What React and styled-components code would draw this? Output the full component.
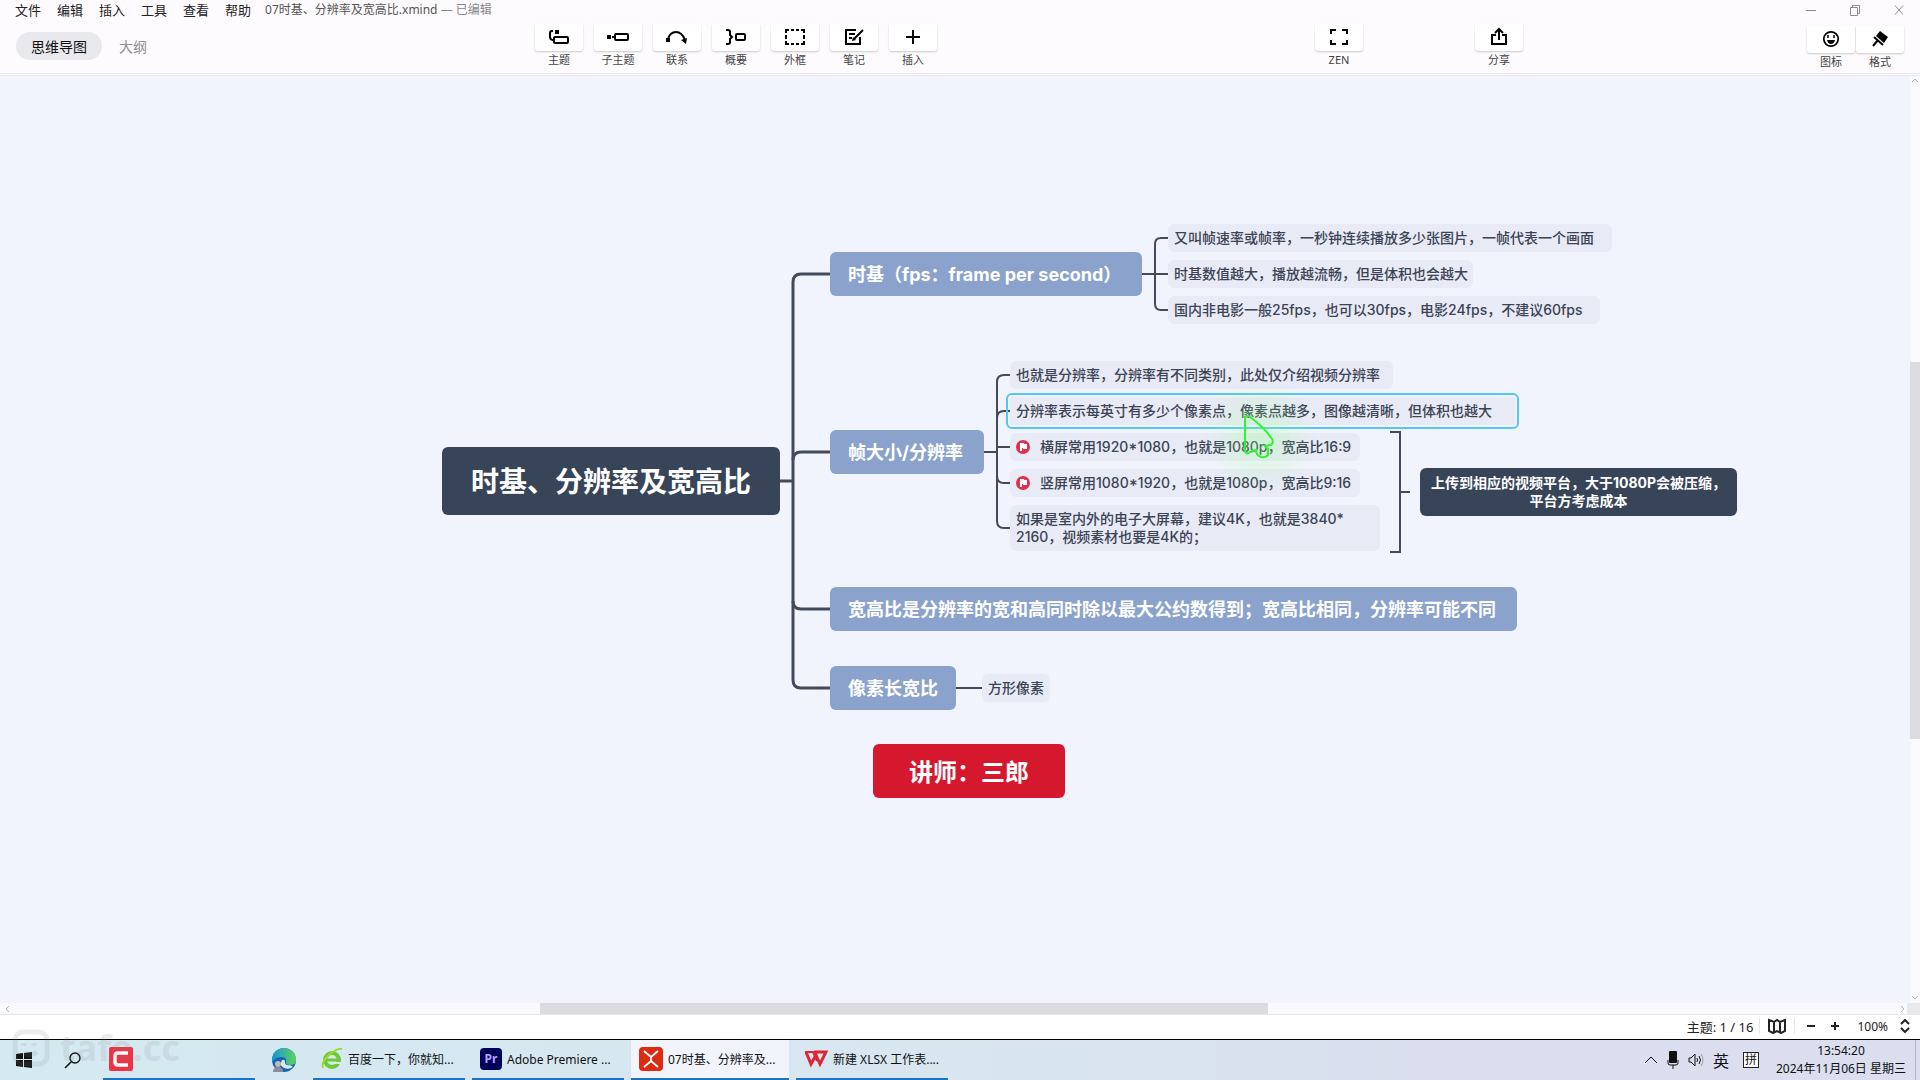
import React, { useState } from "react";
import styled, { createGlobalStyle } from "styled-components";

const menus = ["文件", "编辑", "插入", "工具", "查看", "帮助"];

const tools = [
  { label: "主题", icon: <TopicIcon /> },
  { label: "子主题", icon: <SubtopicIcon /> },
  { label: "联系", icon: <RelationIcon /> },
  { label: "概要", icon: <SummaryIcon /> },
  { label: "外框", icon: <BoundaryIcon /> },
  { label: "笔记", icon: <NoteIcon /> },
  { label: "插入", icon: <PlusIcon /> },
];

const branches = [
  { x: 830, y: 176, w: 312, text: "时基（fps：frame per second）" },
  { x: 830, y: 354, w: 154, text: "帧大小/分辨率" },
  {
    x: 830,
    y: 511,
    w: 687,
    text: "宽高比是分辨率的宽和高同时除以最大公约数得到；宽高比相同，分辨率可能不同",
  },
  { x: 830, y: 590, w: 126, text: "像素长宽比" },
];

const leaves = [
  { x: 1168, y: 148, w: 444, text: "又叫帧速率或帧率，一秒钟连续播放多少张图片，一帧代表一个画面" },
  { x: 1168, y: 184, w: 305, text: "时基数值越大，播放越流畅，但是体积也会越大" },
  { x: 1168, y: 220, w: 432, text: "国内非电影一般25fps，也可以30fps，电影24fps，不建议60fps" },
  { x: 1010, y: 285, w: 383, text: "也就是分辨率，分辨率有不同类别，此处仅介绍视频分辨率" },
  {
    x: 1010,
    y: 321,
    w: 505,
    selected: true,
    text: "分辨率表示每英寸有多少个像素点，像素点越多，图像越清晰，但体积也越大",
  },
  { x: 1010, y: 357, w: 350, flag: true, text: "横屏常用1920*1080，也就是1080p，宽高比16:9" },
  { x: 1010, y: 393, w: 350, flag: true, text: "竖屏常用1080*1920，也就是1080p，宽高比9:16" },
  {
    x: 1010,
    y: 429,
    w: 370,
    text: "如果是室内外的电子大屏幕，建议4K，也就是3840*\n2160，视频素材也要是4K的；",
  },
  { x: 982, y: 598, w: 68, text: "方形像素" },
];

const apps = [
  { name: "百度一下，你就知...", icon: <BrowserIcon /> },
  { name: "Adobe Premiere ...", icon: <PremiereIcon /> },
  { name: "07时基、分辨率及...", icon: <XmindIcon />, active: true },
  { name: "新建 XLSX 工作表....", icon: <WpsIcon /> },
];

function App() {
  const [tab, setTab] = useState("map");
  return (
    <Window>
      <GlobalStyle />
      <Header>
        <TitleBar>
          <MenuBar>
            {menus.map((m) => (
              <MenuButton key={m}>{m}</MenuButton>
            ))}
          </MenuBar>
          <FileName>
            07时基、分辨率及宽高比.xmind <Edited>— 已编辑</Edited>
          </FileName>
          <WindowButtons>
            <WindowButton aria-label="最小化">
              <svg width="12" height="12" viewBox="0 0 12 12">
                <path d="M1 6.500h10" />
              </svg>
            </WindowButton>
            <WindowButton aria-label="还原">
              <svg width="12" height="12" viewBox="0 0 12 12">
                <path d="M1.500 3.500h7v8h-7zM3.500 3.500v-2h7v8h-2" />
              </svg>
            </WindowButton>
            <WindowButton aria-label="关闭">
              <svg width="12" height="12" viewBox="0 0 12 12">
                <path d="M2 1.500l8 9M10 1.500l-8 9" />
              </svg>
            </WindowButton>
          </WindowButtons>
        </TitleBar>
        <ToolRow>
          <Tabs>
            <Tab $active={tab === "map"} onClick={() => setTab("map")}>
              思维导图
            </Tab>
            <Tab $active={tab === "outline"} onClick={() => setTab("outline")}>
              大纲
            </Tab>
          </Tabs>
          <ToolGroup>
            {tools.map((t) => (
              <Tool key={t.label}>
                <ToolFace>{t.icon}</ToolFace>
                {t.label}
              </Tool>
            ))}
          </ToolGroup>
          <ShareGroup>
            <Tool>
              <ToolFace>
                <ZenIcon />
              </ToolFace>
              ZEN
            </Tool>
            <Tool>
              <ToolFace>
                <ShareIcon />
              </ToolFace>
              分享
            </Tool>
          </ShareGroup>
          <PanelGroup>
            <Tool>
              <ToolFace>
                <SmileIcon />
              </ToolFace>
              图标
            </Tool>
            <Tool>
              <ToolFace>
                <BrushIcon />
              </ToolFace>
              格式
            </Tool>
          </PanelGroup>
        </ToolRow>
      </Header>
      <Workspace>
        <Board>
          <Connections />
          <RootTopic>时基、分辨率及宽高比</RootTopic>
          {branches.map((b) => (
            <Branch key={b.text} $x={b.x} $y={b.y} $w={b.w}>
              {b.text}
            </Branch>
          ))}
          {leaves.map((l) => (
            <Leaf key={l.text} $x={l.x} $y={l.y} $w={l.w} $selected={l.selected}>
              {l.flag && <FlagIcon />}
              {l.text}
            </Leaf>
          ))}
          <Summary>
            上传到相应的视频平台，大于1080P会被压缩，
            <br />
            平台方考虑成本
          </Summary>
          <Teacher>讲师：三郎</Teacher>
          <Pointer />
        </Board>
        <VerticalBar>
          <Arrow d="M2 6l3-3 3 3" />
          <VerticalThumb />
          <Arrow d="M2 3l3 3 3-3" />
        </VerticalBar>
      </Workspace>
      <HorizontalBar>
        <Arrow d="M6 2l-3 3 3 3" />
        <HorizontalThumb />
        <Arrow d="M4 2l3 3-3 3" />
        <Corner />
      </HorizontalBar>
      <StatusBar>
        <Count>主题: 1 / 16</Count>
        <StatusButton aria-label="导航" $framed>
          <MapIcon />
        </StatusButton>
        <StatusButton aria-label="缩小">
          <svg width="10" height="10" viewBox="0 0 10 10">
            <path d="M1 5h8" />
          </svg>
        </StatusButton>
        <StatusButton aria-label="放大">
          <svg width="10" height="10" viewBox="0 0 10 10">
            <path d="M1 5h8M5 1v8" />
          </svg>
        </StatusButton>
        <Zoom>
          100%
          <svg width="10" height="14" viewBox="0 0 10 14">
            <path d="M1 5l4-4 4 4M1 9l4 4 4-4" />
          </svg>
        </Zoom>
      </StatusBar>
      <Taskbar>
        <IconButton aria-label="开始">
          <WindowsIcon />
        </IconButton>
        <IconButton aria-label="搜索">
          <SearchIcon />
        </IconButton>
        <RecorderButton aria-label="Camtasia">
          <CamtasiaIcon />
        </RecorderButton>
        <IconButton aria-label="Edge">
          <EdgeIcon />
        </IconButton>
        <Apps>
          {apps.map((a) => (
            <AppButton key={a.name} $active={a.active}>
              {a.icon}
              {a.name}
            </AppButton>
          ))}
        </Apps>
        <Tray>
          <svg width="14" height="8" viewBox="0 0 14 8">
            <path d="M1 7l6-6 6 6" />
          </svg>
          <MicIcon />
          <SpeakerIcon />
          <Lang>英</Lang>
          <Ime>拼</Ime>
          <Clock>
            13:54:20
            <br />
            2024年11月06日 星期三
          </Clock>
          <ShowDesktop />
        </Tray>
        <Watermark />
      </Taskbar>
    </Window>
  );
}

export default App;

function Connections() {
  return (
    <Lines aria-hidden="true">
      <g strokeWidth="3">
        <path d="M780 405h13M830 198h-29q-8 0 -8 8v398q0 8 8 8h29" />
        <path d="M830 376h-29q-8 0 -8 8M830 533h-29q-8 0 -8-8" />
      </g>
      <g strokeWidth="2">
        <path d="M1142 198h26M1168 162h-7q-6 0 -6 6v60q0 6 6 6h7" />
        <path d="M984 376h13M1010 299h-6q-7 0 -7 7v139q0 7 7 7h6" />
        <path d="M1010 335h-6q-7 0 -7 7M997 371h13M1010 407h-6q-7 0 -7-7" />
        <path d="M956 612h26" />
        <path d="M1390 356h10v120h-10M1400 416h10" />
      </g>
    </Lines>
  );
}

function Pointer() {
  return (
    <PointerBox aria-hidden="true">
      <svg width="34" height="46" viewBox="0 0 34 46">
        <path d="M4 2Q2 2 2 5v31q0 4 3 3l8-3q0 5 5 7 4 1 7-2v-6l-3-3 6-1q3-2 1-6Q20 12 7 3q-2-2-3-1z" />
      </svg>
    </PointerBox>
  );
}

function Arrow({ d }) {
  return (
    <ArrowSvg width="10" height="10" viewBox="0 0 10 10">
      <path d={d} />
    </ArrowSvg>
  );
}

function ToolSvg({ children }) {
  return (
    <svg
      width="22"
      height="20"
      viewBox="0 0 22 20"
      fill="none"
      stroke="#000"
      strokeWidth="2"
    >
      {children}
    </svg>
  );
}

function TopicIcon() {
  return (
    <ToolSvg>
      <rect x="6" y="10" width="14" height="6" rx="1" />
      <path d="M5 4H4q-2 0-2 2v4q0 3 4 3" />
      <path d="M7 3h4v4H7z" fill="#000" stroke="none" />
    </ToolSvg>
  );
}

function SubtopicIcon() {
  return (
    <ToolSvg>
      <rect x="8" y="7" width="13" height="6" rx="1" />
      <path d="M5 10h3" />
      <path d="M0 8h4v4H0z" fill="#000" stroke="none" />
    </ToolSvg>
  );
}

function RelationIcon() {
  return (
    <ToolSvg>
      <path d="M2 12Q4 5 10 5t9 8" />
      <path d="M0 11h4v4H0zM15 13l6-2-1 6z" fill="#000" stroke="none" />
    </ToolSvg>
  );
}

function SummaryIcon() {
  return (
    <ToolSvg>
      <path d="M1 3h2q2 0 2 2v3l2 2-2 2v3q0 2-2 2H1" />
      <rect x="11" y="7" width="9" height="6" rx="1" />
    </ToolSvg>
  );
}

function BoundaryIcon() {
  return (
    <ToolSvg>
      <path d="M2 6V3h3M17 3h3v3M20 14v3h-3M5 17H2v-3M7 3h3M12 3h3M7 17h3M12 17h3M2 8v4M20 8v4" />
    </ToolSvg>
  );
}

function NoteIcon() {
  return (
    <ToolSvg>
      <path d="M13 3H3v14h14v-7M6 7h6M6 11h3M11 12l9-9" />
      <path d="M10 10l3 3-4 1z" fill="#000" stroke="none" />
    </ToolSvg>
  );
}

function PlusIcon() {
  return (
    <ToolSvg>
      <path d="M4 10h14M11 3v14" />
    </ToolSvg>
  );
}

function ZenIcon() {
  return (
    <ToolSvg>
      <path d="M3 7V3h5M14 3h5v4M19 13v4h-5M8 17H3v-4" />
    </ToolSvg>
  );
}

function ShareIcon() {
  return (
    <ToolSvg>
      <path d="M8 8H4v9h14V8h-4M11 13V3M7 6l4-4 4 4" />
    </ToolSvg>
  );
}

function SmileIcon() {
  return (
    <ToolSvg>
      <circle cx="11" cy="10" r="7.200" strokeWidth="1.700" />
      <path d="M8 6v3M14 6v3" strokeWidth="1.500" />
      <path d="M7 11h8q-1 4-4 4t-4-4z" fill="#000" stroke="none" />
    </ToolSvg>
  );
}

function BrushIcon() {
  return (
    <ToolSvg>
      <path d="M11 2l8 6-4 6-8-7z" fill="#000" stroke="none" />
      <path d="M5 8l9 8M9 11l-5 6" />
    </ToolSvg>
  );
}

function FlagIcon() {
  return (
    <Flag width="14" height="14" viewBox="0 0 14 14">
      <circle cx="7" cy="7" r="7" fill="#e0304e" />
      <path d="M4 3h4v1h3v5H7V8H6v3H4z" fill="#fff" />
      <path d="M5.300 4h2v1h2v3H7.700V7H5.300z" fill="#e0304e" />
      <path d="M5 3.500h3l2 1.500v3H7L5 7z" fill="#fff" />
    </Flag>
  );
}

function MapIcon() {
  return (
    <svg width="18" height="16" viewBox="0 0 18 16">
      <path d="M1 2l5 2 3-2 3 2 5-2v11l-4 2-4-2-4 2-4-2zM6 4v10M12 4v10" />
    </svg>
  );
}

function WindowsIcon() {
  return (
    <svg width="16" height="16" viewBox="0 0 16 16">
      <path
        d="M0 2l7-1v6H0zM8 1l8-1v7H8zM0 8h7v7l-7-1zM8 8h8v8l-8-1z"
        fill="#111"
      />
    </svg>
  );
}

function SearchIcon() {
  return (
    <svg width="17" height="17" viewBox="0 0 17 17" fill="none" stroke="#111">
      <circle cx="11" cy="6" r="5" strokeWidth="1.400" />
      <path d="M7 10l-6 6" strokeWidth="1.600" />
    </svg>
  );
}

function CamtasiaIcon() {
  return (
    <svg width="24" height="24" viewBox="0 0 24 24">
      <rect width="24" height="24" rx="2" fill="#ee3344" />
      <path
        d="M19 6H9q-3 0-3 3v6q0 3 3 3h10"
        fill="none"
        stroke="#fff"
        strokeWidth="3.500"
      />
    </svg>
  );
}

function EdgeIcon() {
  return (
    <svg width="24" height="24" viewBox="0 0 24 24">
      <defs>
        <linearGradient id="edgeTop" x1="0" x2="1" y1="0" y2="0">
          <stop offset="0" stopColor="#1595d8" />
          <stop offset="1" stopColor="#5ed45a" />
        </linearGradient>
      </defs>
      <circle cx="12" cy="12" r="12" fill="#1464b4" />
      <path
        d="M0 12a12 12 0 0 1 24 0q0 5-6 5-5 0-4-3 1-5-5-5-7 0-9 6z"
        fill="url(#edgeTop)"
      />
      <path d="M10 12q-3 5 2 8 5 2 9-1l-3-2q-5 1-5-3 0-3-3-2z" fill="#d5eaf2" />
      <circle cx="6" cy="16" r="3" fill="#c8b7b0" />
      <path d="M1 24q0-5 5-5t5 5z" fill="#8e8c98" />
    </svg>
  );
}

function BrowserIcon() {
  return (
    <svg width="22" height="22" viewBox="0 0 22 22" fill="none">
      <circle cx="11" cy="12" r="7" stroke="#6ccb30" strokeWidth="4" />
      <path d="M6 12h12" stroke="#6ccb30" strokeWidth="3" />
      <path d="M13 15h8" stroke="#d7e9f2" strokeWidth="2" />
      <path d="M2 20Q0 14 8 7t13-6" stroke="#a2d62e" strokeWidth="2" />
    </svg>
  );
}

function PremiereIcon() {
  return (
    <svg width="22" height="22" viewBox="0 0 22 22">
      <rect width="22" height="22" rx="4" fill="#00005b" />
      <text
        x="11"
        y="15"
        textAnchor="middle"
        fill="#b9a0ff"
        fontSize="12"
        fontWeight="700"
      >
        Pr
      </text>
    </svg>
  );
}

function XmindIcon() {
  return (
    <svg width="24" height="24" viewBox="0 0 24 24">
      <rect width="24" height="24" rx="4" fill="#dc2a13" />
      <path
        d="M5 4l7 6 7-6M5 20l7-6 7 6M12 10v4"
        fill="none"
        stroke="#fff"
        strokeWidth="1.800"
      />
    </svg>
  );
}

function WpsIcon() {
  return (
    <svg width="24" height="18" viewBox="0 0 24 18" fill="none" stroke="#dd2533">
      <path d="M2 2l5 12 5-9 4 9 6-12H10" strokeWidth="3" />
      <path d="M1 2h8l4 9" strokeWidth="2" />
    </svg>
  );
}

function MicIcon() {
  return (
    <svg width="12" height="18" viewBox="0 0 12 18">
      <rect x="2" y="0" width="8" height="12" rx="1" fill="#111" stroke="none" />
      <path d="M1 9v3q0 2 2 2h6q2 0 2-2V9M6 14v4" />
    </svg>
  );
}

function SpeakerIcon() {
  return (
    <svg width="16" height="14" viewBox="0 0 16 14">
      <path d="M1 5h2l4-4v12L3 9H1zM9 5q1 2 0 4M11 3q3 4 0 8" />
      <path d="M13 1q4 6 0 12" opacity="0.3" />
    </svg>
  );
}

function Watermark() {
  return (
    <Mark aria-hidden="true">
      <svg width="38" height="38" viewBox="0 0 38 38">
        <rect x="3" y="3" width="32" height="32" rx="8" />
        <path d="M12 14v3M22 14v3M12 24q6 4 13-1" />
      </svg>
      tafe.cc
    </Mark>
  );
}

const GlobalStyle = createGlobalStyle`
  * {
    box-sizing: border-box;
  }
  body {
    margin: 0;
    font-family: "Noto Sans", "Noto Sans CJK SC", sans-serif;
    color: #222;
  }
  button {
    border: 0;
    padding: 0;
    background: none;
    color: inherit;
    font: inherit;
    white-space: nowrap;
    cursor: pointer;
  }
  svg {
    flex: none;
    display: block;
  }
`;

const Window = styled.div`
  display: flex;
  flex-direction: column;
  min-height: 100vh;
  overflow: hidden;
`;

const Header = styled.header`
  height: 76px;
  background: #fdfbfe;
  border-bottom: 3px double #e9e8f2;
`;

const TitleBar = styled.div`
  display: flex;
  align-items: center;
  height: 20px;
  padding: 0 15px;
`;

const MenuBar = styled.nav`
  display: flex;
  gap: 16px;
`;

const MenuButton = styled.button`
  font-size: 13px;
  line-height: 20px;
`;

const FileName = styled.div`
  margin-left: 14px;
  font-size: 12px;
  line-height: 20px;
  color: #555;
`;

const Edited = styled.span`
  color: #888;
`;

const WindowButtons = styled.div`
  display: flex;
  gap: 32px;
  margin-left: auto;
`;

const WindowButton = styled.button`
  svg {
    fill: none;
    stroke: #8d8c92;
  }
`;

const ToolRow = styled.div`
  display: flex;
  align-items: flex-start;
  padding: 4px 16px 0;
`;

const Tabs = styled.div`
  display: flex;
  flex: 0 1 519px;
  gap: 2px;
  padding-top: 8px;
`;

const Tab = styled.button`
  height: 28px;
  padding: 0 15px;
  border-radius: 14px;
  font-size: 14px;
  color: ${(props) => (props.$active ? "#111" : "#8f8e94")};
  background: ${(props) => (props.$active ? "#e9e8ec" : "transparent")};
`;

const Tool = styled.button`
  display: flex;
  flex-direction: column;
  align-items: center;
  gap: 1px;
  width: 48px;
  font-size: 11px;
  line-height: 16px;
  color: #444;
`;

const ToolFace = styled.span`
  display: flex;
  align-items: center;
  justify-content: center;
  width: 48px;
  height: 27px;
  padding-bottom: 2px;
  background: #fff;
  border-radius: 0 0 3px 3px;
  box-shadow: 0 1px 2px rgba(0, 0, 0, 0.2);
`;

const ToolGroup = styled.div`
  display: flex;
  gap: 11px;
`;

const ShareGroup = styled.div`
  display: flex;
  gap: 112px;
  margin-left: 378px;
`;

const PanelGroup = styled.div`
  display: flex;
  gap: 1px;
  margin-left: auto;
  padding-top: 2px;
`;

const Workspace = styled.main`
  display: flex;
  flex: 1;
  background: #f2f4fd;
`;

const Board = styled.div`
  position: relative;
  flex: 1;
  min-width: 0;
  font-family: Inter, "Noto Sans CJK SC", sans-serif;
`;

const Lines = styled.svg`
  position: absolute;
  inset: 0;
  width: 100%;
  height: 100%;
  fill: none;
  stroke: #434a5c;
`;

const Topic = styled.div`
  position: absolute;
  display: flex;
  align-items: center;
  border-radius: 6px;
  white-space: pre;
  color: #fff;
  font-weight: 700;
`;

const RootTopic = styled(Topic)`
  left: 442px;
  top: 371px;
  width: 338px;
  height: 68px;
  padding-bottom: 2px;
  justify-content: center;
  background: #384559;
  font-size: 28px;
`;

const Branch = styled(Topic)`
  left: ${(props) => props.$x}px;
  top: ${(props) => props.$y}px;
  width: ${(props) => props.$w}px;
  height: 44px;
  padding: 0 0 2px 18px;
  background: #8ba2cc;
  font-size: 18px;
`;

const Leaf = styled(Topic)`
  left: ${(props) => props.$x}px;
  top: ${(props) => props.$y}px;
  width: ${(props) => props.$w}px;
  padding: 5px 6px;
  border-radius: ${(props) => (props.$selected ? 2 : 6)}px;
  background: #e8eaf6;
  color: #3b4354;
  font-size: 14px;
  font-weight: 500;
  line-height: 18px;
  outline: ${(props) => (props.$selected ? "2px solid #55c6ef" : "none")};
  outline-offset: 2px;
`;

const Flag = styled.svg`
  margin-right: 10px;
`;

const Summary = styled(Topic)`
  display: block;
  left: 1420px;
  top: 392px;
  width: 317px;
  height: 48px;
  padding: 6px 10px;
  text-align: center;
  background: #384559;
  font-size: 14px;
  line-height: 18px;
`;

const Teacher = styled(Topic)`
  left: 873px;
  top: 668px;
  width: 192px;
  height: 54px;
  padding-bottom: 2px;
  justify-content: center;
  background: #d6182f;
  font-size: 24px;
`;

const PointerBox = styled.div`
  position: absolute;
  left: 1203px;
  top: 303px;
  padding: 35px 40px;
  background: radial-gradient(
    closest-side,
    rgba(150, 255, 140, 0.3),
    rgba(150, 255, 140, 0)
  );
  path {
    fill: none;
    stroke: #2df52d;
    stroke-width: 2;
  }
`;

const VerticalBar = styled.div`
  display: flex;
  flex-direction: column;
  justify-content: space-between;
  width: 10px;
  background: #faf9fe;
`;

const VerticalThumb = styled.div`
  flex: 0 0 377px;
  margin-bottom: -22px;
  background: #dcdbe2;
`;

const HorizontalBar = styled.div`
  display: flex;
  align-items: center;
  justify-content: space-between;
  height: 11px;
  padding-left: 3px;
  background: #faf9fe;
`;

const HorizontalThumb = styled.div`
  width: 728px;
  height: 11px;
  margin: 0 629px 0 auto;
  background: #dcdbe2;
`;

const Corner = styled.div`
  width: 13px;
  height: 11px;
  background: #e9e8ee;
`;

const ArrowSvg = styled.svg`
  fill: none;
  stroke: #b5b4bc;
`;

const StatusBar = styled.footer`
  display: flex;
  align-items: center;
  justify-content: flex-end;
  height: 25px;
  padding: 0 10px 2px 0;
  border-top: 1px solid #e8e7ec;
  background: #fff;
  font-size: 13px;
  svg {
    fill: none;
    stroke: #222;
    stroke-width: 2;
  }
`;

const Count = styled.span`
  margin-right: 6px;
`;

const StatusButton = styled.button`
  display: flex;
  align-items: center;
  justify-content: center;
  width: ${(props) => (props.$framed ? 36 : 24)}px;
  height: 16px;
  margin-right: ${(props) => (props.$framed ? 4 : 0)}px;
  border: solid #e6e5ea;
  border-width: ${(props) => (props.$framed ? "0 1px" : 0)};
`;

const Zoom = styled.button`
  display: flex;
  align-items: center;
  gap: 12px;
  margin-left: 10px;
  font-size: 12px;
`;

const Taskbar = styled.footer`
  position: relative;
  display: flex;
  height: 41px;
  border-top: 1px solid #000;
  background: linear-gradient(90deg, #d4e9f1, #d8e6f0 50%, #dadeee 75%, #dadeee);
  font-size: 12px;
  color: #111;
`;

const IconButton = styled.button`
  display: flex;
  align-items: center;
  justify-content: center;
  width: 48px;
`;

const RecorderButton = styled.button`
  display: flex;
  align-items: center;
  width: 152px;
  margin: 0 5px 0 7px;
  padding-left: 6px;
  border-bottom: 2px solid #1a73c5;
`;

const Apps = styled.div`
  display: flex;
  gap: 7px;
  margin-left: 5px;
`;

const AppButton = styled.button`
  display: flex;
  align-items: center;
  gap: 5px;
  width: ${(props) => (props.$active ? 158 : 152)}px;
  padding-left: 8px;
  border-bottom: 2px solid #1a73c5;
  background: ${(props) => (props.$active ? "#f2f4fc" : "transparent")};
`;

const Tray = styled.div`
  display: flex;
  align-items: center;
  gap: 9px;
  margin-left: auto;
  svg {
    fill: none;
    stroke: #111;
  }
`;

const Lang = styled.span`
  font-size: 16px;
`;

const Ime = styled.span`
  width: 16px;
  height: 16px;
  margin: 0 8px 0 5px;
  border: 1px solid #222;
  background: #fff;
  font-size: 12px;
  line-height: 14px;
  text-align: center;
`;

const Clock = styled.time`
  line-height: 18px;
  text-align: center;
`;

const ShowDesktop = styled.span`
  width: 5px;
  height: 40px;
  border-left: 1px solid #b4b8c8;
`;

const Mark = styled.div`
  position: absolute;
  left: 12px;
  top: -11px;
  display: flex;
  align-items: center;
  gap: 10px;
  color: #888;
  font-size: 36px;
  font-weight: 700;
  line-height: 38px;
  opacity: 0.15;
  pointer-events: none;
  svg {
    fill: none;
    stroke: #888;
    stroke-width: 5;
  }
`;
